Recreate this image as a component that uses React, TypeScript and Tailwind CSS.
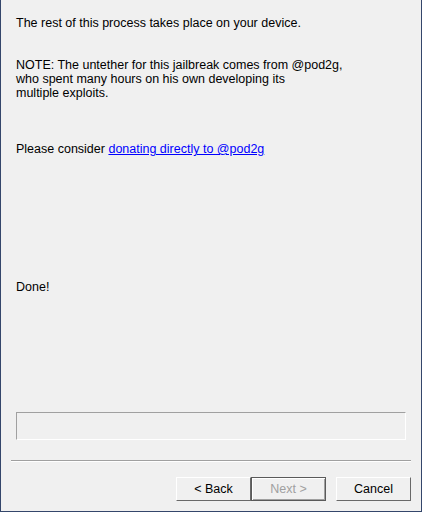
export default function App() {
  const font = { fontFamily: "'Liberation Sans', Arial, sans-serif" };
  return (
    <div
      className="w-[422px] h-[512px] bg-[#f0f0f0] border-l border-r border-b border-[#34466b] flex flex-col text-[12.5px] leading-[14px] text-black overflow-hidden"
      style={font}
    >
      <div className="flex flex-col pl-[15px] pt-[16px]">
        <p>The rest of this process takes place on your device.</p>
        <p className="mt-[28px]">
          NOTE: The untether for this jailbreak comes from @pod2g,
          <br />
          who spent many hours on his own developing its
          <br />
          multiple exploits.
        </p>
        <p className="mt-[42px]">
          Please consider{" "}
          <a href="#" className="text-[#0000ff] underline">
            donating directly to @pod2g
          </a>
        </p>
        <p className="mt-[124px]">Done!</p>
      </div>

      <div className="mt-[118px] ml-[15px] w-[390px] h-[28px] border-t border-l border-[#a0a0a0] border-b border-r border-b-white border-r-white" />

      <div className="mt-[20px] ml-[10px] w-[400px] border-t border-[#a0a0a0] border-b border-b-white" />

      <div className="mt-[15px] flex pl-[175px]">
        <button className="w-[75px] h-[24px] bg-[#f0f0f0] border border-t-white border-l-white border-b-[#696969] border-r-[#696969] text-[12.5px]">
          &lt; Back
        </button>
        <button
          disabled
          className="w-[75px] h-[24px] bg-[#f0f0f0] border border-[#5a5a5a] text-[12.5px] text-[#a0a0a0] shadow-[inset_1px_1px_0_#ffffff,inset_-1px_-1px_0_#a0a0a0]"
        >
          Next &gt;
        </button>
        <button className="ml-[10px] w-[75px] h-[24px] bg-[#f0f0f0] border border-t-white border-l-white border-b-[#696969] border-r-[#696969] text-[12.5px]">
          Cancel
        </button>
      </div>
    </div>
  );
}
